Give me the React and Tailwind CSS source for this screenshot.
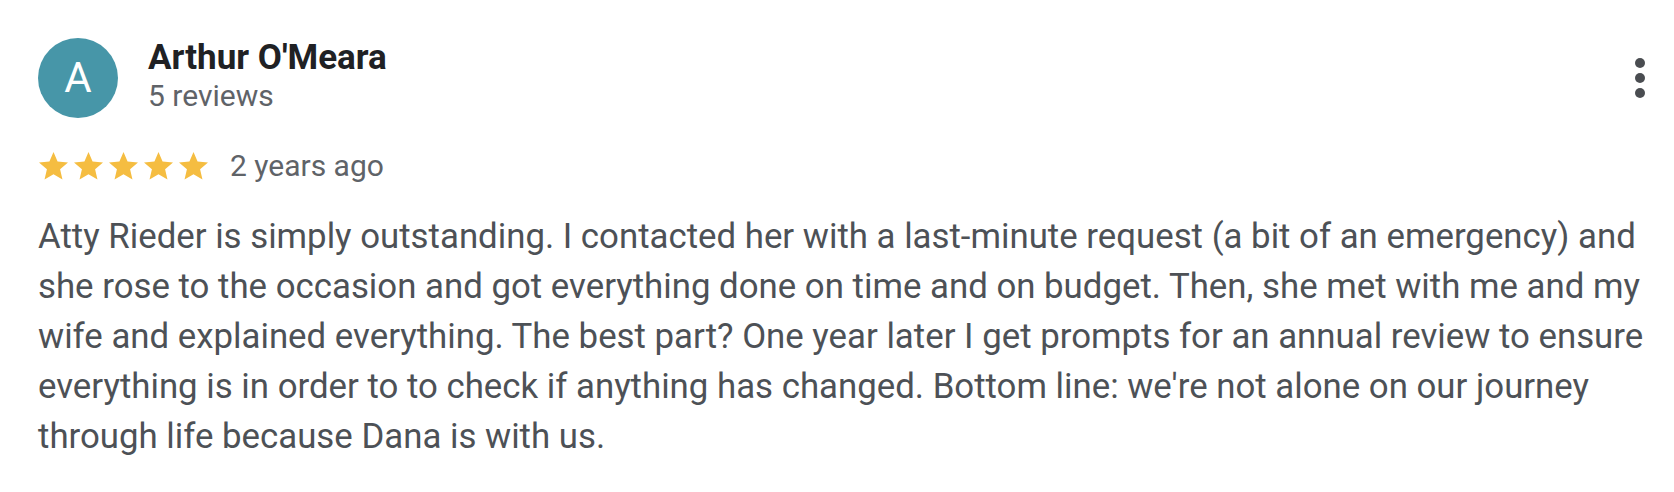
import React from "react";

const review = {
  name: "Arthur O'Meara",
  initial: "A",
  count: "5 reviews",
  rating: 5,
  when: "2 years ago",
  text:
    "Atty Rieder is simply outstanding. I contacted her with a last-minute request (a bit of an emergency) and she rose to the occasion and got everything done on time and on budget. Then, she met with me and my wife and explained everything. The best part? One year later I get prompts for an annual review to ensure everything is in order to to check if anything has changed. Bottom line: we're not alone on our journey through life because Dana is with us.",
};

function Star() {
  return (
    <svg viewBox="2 2 20 19.3" className="w-[29px] h-[28px]" fill="#f5bd41">
      <path d="M12 17.27L18.18 21l-1.64-7.03L22 9.24l-7.19-.61L12 2 9.19 8.63 2 9.24l5.46 4.73L5.82 21z" />
    </svg>
  );
}

function MoreIcon() {
  return (
    <svg viewBox="0 0 12 42" className="w-[12px] h-[42px]" fill="#4a4d51">
      <circle cx="6" cy="6" r="5" />
      <circle cx="6" cy="21" r="5" />
      <circle cx="6" cy="36" r="5" />
    </svg>
  );
}

export default function App() {
  return (
    <div
      className="w-[1674px] h-[492px] bg-white pl-[38px] pr-[12px] pt-[38px]"
      style={{ fontFamily: "Roboto, 'Liberation Sans', sans-serif" }}
    >
      <div className="flex items-start">
        <div className="w-[80px] h-[80px] rounded-full bg-[#4796a8] flex items-center justify-center text-white text-[42px] leading-none">
          {review.initial}
        </div>
        <div className="flex-1 ml-[30px]">
          <div className="text-[35px] leading-[40px] font-bold text-[#202124]">
            {review.name}
          </div>
          <div className="text-[30px] leading-[36px] text-[#5f6368]">
            {review.count}
          </div>
        </div>
        <button className="mt-[19px] mr-[16px]">
          <MoreIcon />
        </button>
      </div>

      <div className="flex items-center mt-[30px] pl-[1px]">
        <div className="flex gap-[6px]">
          {Array.from({ length: review.rating }).map((_, i) => (
            <Star key={i} />
          ))}
        </div>
        <span className="ml-[22px] text-[30px] leading-[36px] text-[#5f6368]">
          {review.when}
        </span>
      </div>

      <p className="mt-[27px] text-[34.8px] leading-[50px] text-[#4d5156]">
        {review.text}
      </p>
    </div>
  );
}
